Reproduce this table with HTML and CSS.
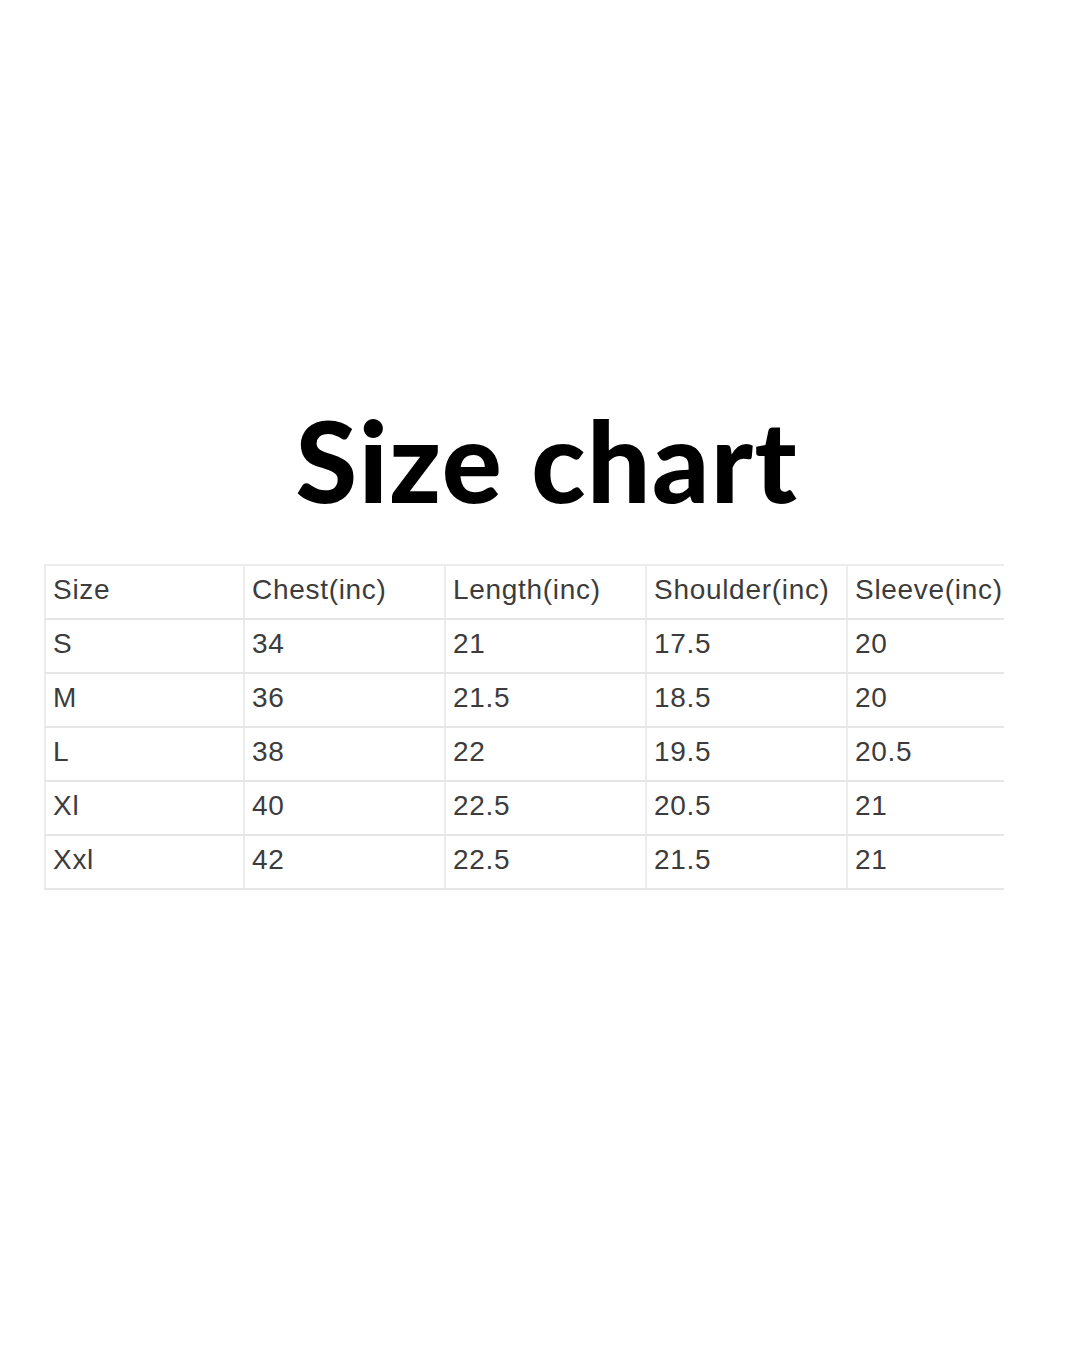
FILE: index.html
```html
<!DOCTYPE html>
<html>
<head>
<meta charset="utf-8">
<link rel="stylesheet" href="styles.css">
</head>
<body>
<main class="page">
  <h1 class="title">Size chart</h1>
  <div class="chart">
    <div class="row">
      <div class="cell">Size</div><div class="cell">Chest(inc)</div><div class="cell">Length(inc)</div><div class="cell">Shoulder(inc)</div><div class="cell">Sleeve(inc)</div>
    </div>
    <div class="row">
      <div class="cell">S</div><div class="cell">34</div><div class="cell">21</div><div class="cell">17.5</div><div class="cell">20</div>
    </div>
    <div class="row">
      <div class="cell">M</div><div class="cell">36</div><div class="cell">21.5</div><div class="cell">18.5</div><div class="cell">20</div>
    </div>
    <div class="row">
      <div class="cell">L</div><div class="cell">38</div><div class="cell">22</div><div class="cell">19.5</div><div class="cell">20.5</div>
    </div>
    <div class="row">
      <div class="cell">Xl</div><div class="cell">40</div><div class="cell">22.5</div><div class="cell">20.5</div><div class="cell">21</div>
    </div>
    <div class="row">
      <div class="cell">Xxl</div><div class="cell">42</div><div class="cell">22.5</div><div class="cell">21.5</div><div class="cell">21</div>
    </div>
  </div>
</main>
</body>
</html>
```
FILE: styles.css
```css
html, body {
  margin: 0;
  padding: 0;
  background: #ffffff;
}
.page {
  width: 1080px;
  height: 1350px;
  padding-top: 395px;
  box-sizing: border-box;
}
.title {
  margin: 0;
  padding-left: 14px;
  text-align: center;
  font-family: "Lato", "DejaVu Sans", sans-serif;
  font-weight: 900;
  font-size: 112px;
  line-height: 130px;
  color: #000;
  letter-spacing: 1.5px;
}
.chart {
  margin: 39px 0 0 44px;
  width: 960px;
  border-top: 2px solid #ececec;
  font-family: "Liberation Sans", Arial, sans-serif;
  font-size: 28px;
  letter-spacing: 0.7px;
  color: #3c3c3c;
}
.row {
  display: grid;
  grid-template-columns: 199px 201px 201px 201px 158px;
  border-bottom: 2px solid #e6e6e6;
}
.cell {
  height: 52px;
  line-height: 48px;
  padding-left: 7px;
  border-left: 2px solid #ececec;
  white-space: nowrap;
}
```
